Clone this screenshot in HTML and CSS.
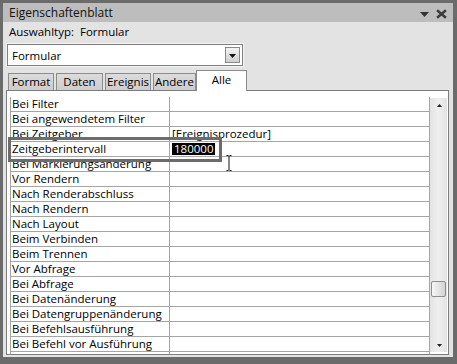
FILE: index.html
```html
<!DOCTYPE html>
<html lang="de">
<head>
<meta charset="utf-8">
<title>Eigenschaftenblatt</title>
<link rel="stylesheet" href="styles.css">
</head>
<body>
<div class="window">
  <div class="titlebar">
    <span class="title">Eigenschaftenblatt</span>
    <svg class="tb-icons" width="30" height="19" viewBox="0 0 30 19">
      <polygon points="1,9 10,9 5.5,14" fill="#333"/>
      <path d="M19 8 L26 14 M26 8 L19 14" stroke="#3c3c3c" stroke-width="2.4" stroke-linecap="square"/>
    </svg>
  </div>
  <div class="seltype">Auswahltyp:&nbsp; Formular</div>
  <div class="combo">
    <span class="combo-text">Formular</span>
    <span class="combo-btn">
      <svg width="7" height="4" viewBox="0 0 7 4"><polygon points="0,0 7,0 3.5,4" fill="#111"/></svg>
    </span>
  </div>
  <div class="tabs">
    <div class="tab t-format">Format</div>
    <div class="tab t-daten">Daten</div>
    <div class="tab t-ereignis">Ereignis</div>
    <div class="tab t-andere">Andere</div>
    <div class="tab t-alle active">Alle</div>
  </div>
  <div class="panel">
    <div class="grid">
      <div class="row"><div class="name">Bei Filter</div><div class="val"></div></div>
      <div class="row"><div class="name">Bei angewendetem Filter</div><div class="val"></div></div>
      <div class="row"><div class="name">Bei Zeitgeber</div><div class="val">[Ereignisprozedur]</div></div>
      <div class="row"><div class="name">Zeitgeberintervall</div><div class="val"><span class="sel">180000</span></div></div>
      <div class="row"><div class="name">Bei Markierungsänderung</div><div class="val"></div></div>
      <div class="row"><div class="name">Vor Rendern</div><div class="val"></div></div>
      <div class="row"><div class="name">Nach Renderabschluss</div><div class="val"></div></div>
      <div class="row"><div class="name">Nach Rendern</div><div class="val"></div></div>
      <div class="row"><div class="name">Nach Layout</div><div class="val"></div></div>
      <div class="row"><div class="name">Beim Verbinden</div><div class="val"></div></div>
      <div class="row"><div class="name">Beim Trennen</div><div class="val"></div></div>
      <div class="row"><div class="name">Vor Abfrage</div><div class="val"></div></div>
      <div class="row"><div class="name">Bei Abfrage</div><div class="val"></div></div>
      <div class="row"><div class="name">Bei Datenänderung</div><div class="val"></div></div>
      <div class="row"><div class="name">Bei Datengruppenänderung</div><div class="val"></div></div>
      <div class="row"><div class="name">Bei Befehlsausführung</div><div class="val"></div></div>
      <div class="row"><div class="name">Bei Befehl vor Ausführung</div><div class="val"></div></div>
      <div class="row"><div class="name"></div><div class="val"></div></div>
    </div>
    <div class="scrollbar">
      <div class="sb-btn">
        <svg width="5" height="3" viewBox="0 0 5 3"><polygon points="0,3 5,3 2.5,0" fill="#222"/></svg>
      </div>
      <div class="sb-track"><div class="sb-thumb"></div></div>
      <div class="sb-btn">
        <svg width="5" height="3" viewBox="0 0 5 3"><polygon points="0,0 5,0 2.5,3" fill="#222"/></svg>
      </div>
    </div>
    <div class="focus-box"></div>
    <svg class="ibeam" width="6" height="16" viewBox="0 0 6 16">
      <path d="M0.5 0.5 H2.5 M3.5 0.5 H5.5 M3 1 V15 M0.5 15.5 H2.5 M3.5 15.5 H5.5" stroke="#111" stroke-width="1" fill="none"/>
    </svg>
  </div>
</div>
</body>
</html>
```

FILE: styles.css
```css
html, body {
  margin: 0;
  padding: 0;
}

body {
  background: #6b6b6b;
  font-family: "Open Sans", "Noto Sans", "Liberation Sans", sans-serif;
  font-size: 11.5px;
  color: #000;
}

.window {
  margin: 3px 4px 7px 3px;
  height: 354px;
  background: #e3e3e3;
  display: flex;
  flex-direction: column;
}

.titlebar {
  height: 19px;
  background: #bdbdbd;
  display: flex;
  align-items: center;
  justify-content: space-between;
  padding: 0 4px 0 6px;
  font-size: 12px;
  color: #111;
}

.tb-icons {
  display: block;
}

.seltype {
  height: 20px;
  line-height: 20px;
  padding-left: 6px;
  font-size: 11.5px;
}

.combo {
  margin: 2px 0 0 4px;
  width: 236px;
  height: 22px;
  box-sizing: border-box;
  border: 1px solid #7f7f7f;
  outline: 1px solid #f4f4f4;
  background: #fff;
  display: flex;
  align-items: center;
  justify-content: space-between;
  padding: 0 2px 0 4px;
  font-size: 11.5px;
}

.combo-btn {
  width: 15px;
  height: 16px;
  box-sizing: border-box;
  border: 1px solid #8a8a8a;
  background: linear-gradient(#f4f4f4, #cfcfcf);
  display: flex;
  align-items: center;
  justify-content: center;
  padding-top: 2px;
}

.tabs {
  margin: 4px 0 0 5px;
  height: 20px;
  display: flex;
  align-items: flex-end;
}

.tab {
  height: 17px;
  box-sizing: border-box;
  border: 1px solid #8c8c8c;
  border-bottom: none;
  background: linear-gradient(#dcdcdc, #cdcdcd);
  text-align: center;
  line-height: 15px;
  font-size: 11.5px;
  margin-right: 2px;
}

.t-format { width: 46px; }
.t-daten { width: 47px; }
.t-ereignis { width: 46px; }
.t-andere { width: 43px; margin-right: 0; }
.t-alle { width: 51px; }

.tab.active {
  height: 21px;
  background: #fff;
  position: relative;
  top: 1px;
  z-index: 2;
  line-height: 17px;
}

.panel {
  position: relative;
  margin-left: 3px;
  width: 443px;
  height: 265px;
  box-sizing: border-box;
  border: 1px solid #7d7d7d;
  background: #fff;
  display: flex;
  align-items: flex-start;
  padding: 6px 0 0 3px;
  overflow: hidden;
}

.grid {
  width: 420px;
  height: 100%;
  box-sizing: border-box;
  border-left: 1px solid #a5a5a5;
  border-right: 1px solid #a5a5a5;
  overflow: hidden;
  flex-shrink: 0;
}

.row {
  display: grid;
  grid-template-columns: 159px 1fr;
  height: 15px;
  box-sizing: border-box;
  border-bottom: 1px solid #a5a5a5;
}

.name {
  border-right: 1px solid #a5a5a5;
  padding-left: 1px;
  line-height: 14px;
  white-space: nowrap;
  overflow: hidden;
}

.val {
  padding-left: 2px;
  line-height: 14px;
  white-space: nowrap;
}

.sel {
  display: inline-block;
  background: #000;
  color: #fff;
  height: 12px;
  line-height: 12px;
  padding: 0 2px;
  margin-top: 1px;
  vertical-align: top;
}

.scrollbar {
  width: 17px;
  height: 254px;
  margin-top: 1px;
  flex-shrink: 0;
  box-sizing: border-box;
  background: linear-gradient(to right, #e4e4e4, #efefef 50%, #e2e2e2);
  display: flex;
  flex-direction: column;
}

.sb-btn {
  height: 14px;
  display: flex;
  align-items: center;
  justify-content: center;
  padding-left: 2px;
}

.sb-track {
  flex: 1;
  padding-top: 169px;
}

.sb-thumb {
  width: 15px;
  height: 16px;
  margin-left: 1px;
  box-sizing: border-box;
  border: 1px solid #8e8e8e;
  border-radius: 2px;
  background: linear-gradient(to right, #f7f7f7, #e6e6e6 50%, #d2d2d2);
}

.focus-box {
  position: absolute;
  left: 1px;
  top: 46px;
  width: 214px;
  height: 25px;
  box-sizing: border-box;
  border: 3px solid #6c6c6c;
  z-index: 3;
}

.ibeam {
  position: absolute;
  left: 219px;
  top: 64px;
  z-index: 3;
}
```
